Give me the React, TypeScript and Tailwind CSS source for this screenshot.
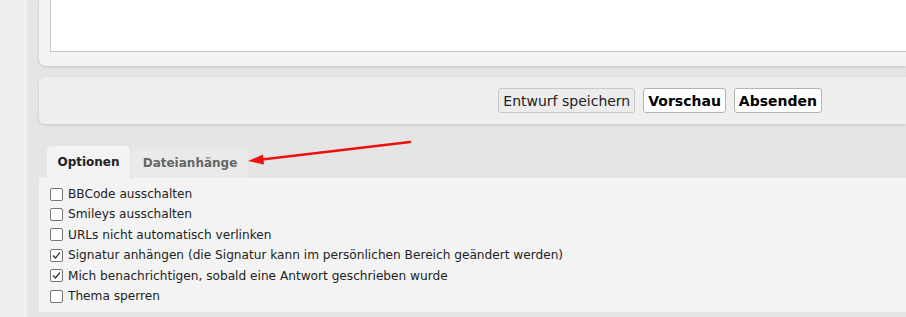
import React from "react";

const options: { label: string; checked: boolean }[] = [
  { label: "BBCode ausschalten", checked: false },
  { label: "Smileys ausschalten", checked: false },
  { label: "URLs nicht automatisch verlinken", checked: false },
  { label: "Signatur anhängen (die Signatur kann im persönlichen Bereich geändert werden)", checked: true },
  { label: "Mich benachrichtigen, sobald eine Antwort geschrieben wurde", checked: true },
  { label: "Thema sperren", checked: false },
];

function Box({ checked }: { checked: boolean }) {
  return (
    <span className="w-[13px] h-[13px] border border-[#767676] bg-white rounded-[2px] flex items-center justify-center shrink-0">
      {checked && (
        <svg width="11" height="11" viewBox="0 0 11 11">
          <path d="M2 5.5 L4.5 8 L9 2.5" fill="none" stroke="#333" strokeWidth="1.2" />
        </svg>
      )}
    </span>
  );
}

export default function App() {
  return (
    <div
      className="relative flex h-[317px] w-[906px] overflow-hidden text-[#1a1a1a]"
      style={{ fontFamily: '"DejaVu Sans", Verdana, sans-serif' }}
    >
      <div className="w-[27px] bg-[#efefef] shrink-0" />
      <div className="flex-1 bg-[#e5e5e5] pl-[12px] flex flex-col">
        {/* top panel with textarea */}
        <div className="h-[66px] bg-[#f3f3f3] rounded-bl-[6px] pl-[11px] shadow-[0_1px_3px_rgba(0,0,0,0.15)]">
          <div className="h-[52px] bg-white border-l border-b border-[#c4c4c4]" />
        </div>
        {/* button bar */}
        <div className="mt-[11px] h-[47px] bg-[#efefef] rounded-l-[6px] shadow-[0_1px_3px_rgba(0,0,0,0.15)] flex items-center justify-end pr-[84px] gap-[8px]">
          <button className="h-[25px] px-[4px] border border-[#c8c8c8] rounded-[3px] bg-[#ececec] text-[14px] text-[#222] leading-none">
            Entwurf speichern
          </button>
          <button className="h-[25px] px-[4px] border border-[#b4b4b4] rounded-[3px] bg-white text-[14px] font-bold text-black leading-none">
            Vorschau
          </button>
          <button className="h-[25px] px-[4px] border border-[#b4b4b4] rounded-[3px] bg-white text-[14px] font-bold text-black leading-none">
            Absenden
          </button>
        </div>
        {/* tabs */}
        <div className="mt-[22px] pl-[8px] flex gap-[2px] h-[32px] items-end">
          <div className="h-[32px] w-[83px] bg-[#f3f3f3] rounded-t-[5px] flex items-center justify-center text-[12px] font-bold text-[#222]">
            Optionen
          </div>
          <div className="h-[31px] w-[116px] bg-[#eaeaea] rounded-t-[5px] flex items-center justify-center text-[12px] font-bold text-[#666]">
            Dateianhänge
          </div>
        </div>
        <div className="h-[134px] bg-[#f3f3f3] pl-[11px] pt-[6px] flex flex-col">
          {options.map((o) => (
            <label key={o.label} className="flex items-center gap-[5px] h-[20.4px] text-[12.15px] text-[#222]">
              <Box checked={o.checked} />
              <span>{o.label}</span>
            </label>
          ))}
        </div>
      </div>
      {/* red annotation arrow */}
      <svg className="absolute left-0 top-0 pointer-events-none" width="906" height="317">
        <line x1="410" y1="142" x2="262" y2="159.5" stroke="#ee1111" strokeWidth="2.5" strokeLinecap="round" />
        <polygon points="248,161 263,154.5 264,164.5" fill="#ee1111" />
      </svg>
    </div>
  );
}
